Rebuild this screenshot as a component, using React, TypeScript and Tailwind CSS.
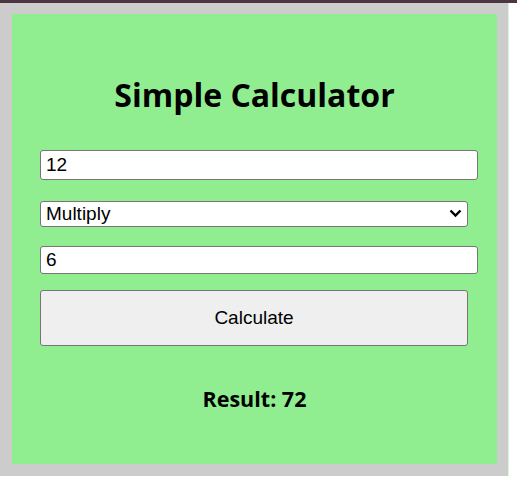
import React from "react";

export default function App() {
  return (
    <div className="w-[517px] h-[487px] bg-white" style={{ fontFamily: "'Liberation Sans', Arial, sans-serif" }}>
      <div className="h-[3px] bg-[#4b3541]" />
      <div className="flex">
        <div className="w-[508px] bg-[#cccccc] pt-[11px] pb-[12px] pl-[12px] pr-[11px]">
          <div className="h-[450px] bg-[#90ee90] px-[28px] pt-[63px] flex flex-col">
            <h1
              className="text-center text-[32px] leading-[36px] h-[36px] font-bold text-black"
              style={{ fontFamily: "'Open Sans', sans-serif" }}
            >
              Simple Calculator
            </h1>
            <input
              type="text"
              defaultValue="12"
              className="mt-[37px] w-[438px] h-[30px] bg-white border border-[#767676] rounded-[3px] px-[5px] text-[19px] text-black outline-none"
            />
            <div className="relative mt-[21px] w-[428px] h-[26px]">
              <select
                defaultValue="multiply"
                className="appearance-none w-full h-full bg-white border border-[#767676] rounded-[3px] pl-[5px] text-[19px] leading-[24px] text-black outline-none"
              >
                <option value="add">Add</option>
                <option value="subtract">Subtract</option>
                <option value="multiply">Multiply</option>
                <option value="divide">Divide</option>
              </select>
              <svg
                className="absolute right-[6px] top-[8px] pointer-events-none"
                width="13"
                height="9"
                viewBox="0 0 13 9"
              >
                <path d="M1.5 1.5 L6.5 6.5 L11.5 1.5" fill="none" stroke="black" strokeWidth="2.4" />
              </svg>
            </div>
            <input
              type="text"
              defaultValue="6"
              className="mt-[19px] w-[438px] h-[28px] bg-white border border-[#767676] rounded-[3px] px-[5px] text-[19px] text-black outline-none"
            />
            <button className="mt-[16px] w-[428px] h-[56px] bg-[#efefef] border border-[#767676] rounded-[3px] text-[19px] leading-[22px] pb-[1px] text-black">
              Calculate
            </button>
            <div
              className="mt-[39px] text-center text-[21.5px] leading-[28px] font-bold text-black"
              style={{ fontFamily: "'Open Sans', sans-serif" }}
            >
              Result: 72
            </div>
          </div>
        </div>
        <div className="w-[1px] h-[473px] bg-[#dff5db]" />
      </div>
    </div>
  );
}
